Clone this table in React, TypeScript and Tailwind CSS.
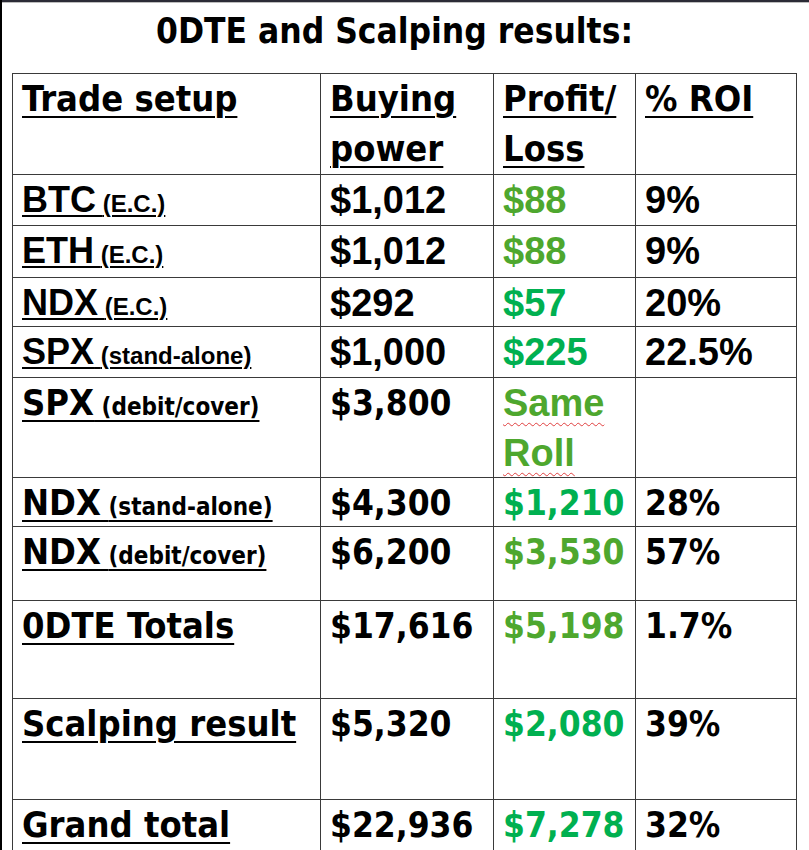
import React from "react";

const AR = "font-['Liberation_Sans',Arial,sans-serif] font-bold";
const NR = "font-['Liberation_Sans_Narrow','DejaVu_Sans_Condensed',sans-serif] font-bold";
const G1 = "text-[#4ea72e]";
const G2 = "text-[#00b050]";

type Row = {
  h: string;
  narrow: boolean;
  label: string;
  sub?: string;
  bp: string;
  pl: string;
  plc: string;
  roi: string;
};

const rows: Row[] = [
  { h: "h-[51px]", narrow: false, label: "BTC", sub: "(E.C.)", bp: "$1,012", pl: "$88", plc: G1, roi: "9%" },
  { h: "h-[52px]", narrow: false, label: "ETH", sub: "(E.C.)", bp: "$1,012", pl: "$88", plc: G1, roi: "9%" },
  { h: "h-[49px]", narrow: false, label: "NDX", sub: "(E.C.)", bp: "$292", pl: "$57", plc: G2, roi: "20%" },
  { h: "h-[51px]", narrow: false, label: "SPX", sub: "(stand-alone)", bp: "$1,000", pl: "$225", plc: G2, roi: "22.5%" },
];

const rows2: Row[] = [
  { h: "h-[49px]", narrow: true, label: "NDX", sub: "(stand-alone)", bp: "$4,300", pl: "$1,210", plc: G2, roi: "28%" },
  { h: "h-[74px]", narrow: true, label: "NDX", sub: "(debit/cover)", bp: "$6,200", pl: "$3,530", plc: G1, roi: "57%" },
  { h: "h-[98px]", narrow: true, label: "0DTE Totals", bp: "$17,616", pl: "$5,198", plc: G1, roi: "1.7%" },
  { h: "h-[101px]", narrow: true, label: "Scalping result", bp: "$5,320", pl: "$2,080", plc: G2, roi: "39%" },
  { h: "h-[60px]", narrow: true, label: "Grand total", bp: "$22,936", pl: "$7,278", plc: G2, roi: "32%" },
];

const cell = "border-r border-[#3a3a3a] pl-[9px] overflow-hidden whitespace-nowrap";
const rowCls = "grid grid-cols-[308px_173px_142px_161px] border-b border-[#3a3a3a]";

function DataRow({ r }: { r: Row }) {
  const f = r.narrow ? NR : AR;
  const big = "text-[36px] leading-[50px]";
  const num = r.narrow ? "text-[35px] leading-[50px]" : "text-[38px] leading-[50px]";
  const ul = r.narrow
    ? "underline decoration-2 underline-offset-[5px]"
    : "underline decoration-2 underline-offset-[3px]";
  return (
    <div className={`${rowCls} ${r.h}`}>
      <div className={`${cell} ${f} ${big} text-black`}>
        <span className={ul}>
          {r.label}
          {r.sub ? <span className="text-[24px]"> {r.sub}</span> : null}
        </span>
      </div>
      <div className={`${cell} ${f} ${num} text-black`}>{r.bp}</div>
      <div className={`${cell} ${f} ${num} ${r.plc}`}>{r.pl}</div>
      <div className={`${cell} ${f} ${num} text-black`}>{r.roi}</div>
    </div>
  );
}

export default function App() {
  const hul = "underline decoration-2 underline-offset-[5px]";
  const wavy = "underline decoration-wavy decoration-[#e04040] decoration-1 underline-offset-[6px]";
  return (
    <div className="w-[809px] h-[850px] overflow-hidden bg-white border-l-2 border-black">
      <div className="h-[3px] bg-[#2b2b36] border-b border-[#bdbdbd]" />
      <div
        className={`h-[70px] flex justify-center pr-[22px] pt-[6px] ${NR} text-[35px] leading-[44px] text-black`}
      >
        0DTE and Scalping results:
      </div>
      <div className="ml-[10px] w-[785px] border-l border-t border-[#3a3a3a]">
        <div className={`${rowCls} h-[101px]`}>
          <div className={`${cell} ${NR} text-[36px] leading-[50px] text-black`}>
            <span className={hul}>Trade setup</span>
          </div>
          <div className={`${cell} ${NR} text-[36px] leading-[50px] text-black`}>
            <div>
              <span className={hul}>Buying</span>
            </div>
            <div>
              <span className={hul}>power</span>
            </div>
          </div>
          <div className={`${cell} ${NR} text-[36px] leading-[50px] text-black`}>
            <div>
              <span className={hul}>Profit/</span>
            </div>
            <div>
              <span className={hul}>Loss</span>
            </div>
          </div>
          <div className={`${cell} ${NR} text-[36px] leading-[50px] text-black`}>
            <span className={hul}>% ROI</span>
          </div>
        </div>
        {rows.map((r, i) => (
          <DataRow key={i} r={r} />
        ))}
        <div className={`${rowCls} h-[100px]`}>
          <div className={`${cell} ${NR} text-[36px] leading-[50px] text-black`}>
            <span className={hul}>
              SPX<span className="text-[24px]"> (debit/cover)</span>
            </span>
          </div>
          <div className={`${cell} ${NR} text-[35px] leading-[50px] text-black`}>$3,800</div>
          <div className={`${cell} ${AR} text-[38px] leading-[50px] ${G1}`}>
            <div>
              <span className={wavy}>Same</span>
            </div>
            <div>
              <span className={wavy}>Roll</span>
            </div>
          </div>
          <div className={cell} />
        </div>
        {rows2.map((r, i) => (
          <DataRow key={i} r={r} />
        ))}
      </div>
    </div>
  );
}
